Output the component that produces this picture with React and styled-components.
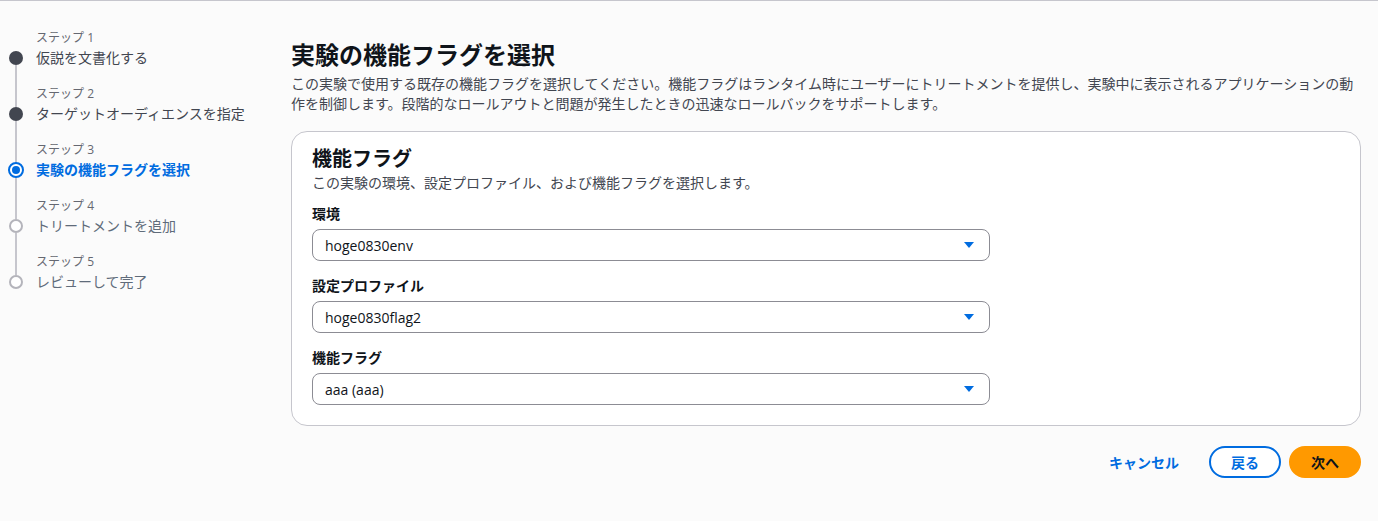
import React from "react";
import styled, { createGlobalStyle } from "styled-components";

const Global = createGlobalStyle`
  html, body { margin: 0; padding: 0; background: #fbfbfb; }
  body {
    font-family: "Open Sans", "Noto Sans CJK JP", sans-serif;
    color: #0f141a;
    font-size: 14px;
    -webkit-font-smoothing: antialiased;
  }
`;

const Page = styled.div`
  min-height: 521px;
  box-sizing: border-box;
  border-top: 1px solid #c6c6cd;
  display: grid;
  grid-template-columns: 291px 1fr;
  padding-right: 17px;
`;

const Nav = styled.nav`
  padding: 29px 0 0 8px;
  display: flex;
  flex-direction: column;
`;

const Step = styled.div`
  display: grid;
  grid-template-columns: 16px 1fr;
  grid-template-rows: 18px 20px ${(p) => (p.$last ? "0px" : "18px")};
  column-gap: 12px;
`;

const StepNum = styled.div`
  grid-column: 2;
  grid-row: 1;
  font-size: 12px;
  line-height: 16px;
  color: #656871;
`;

const StepTitle = styled.div`
  grid-column: 2;
  grid-row: 2;
  font-size: 14px;
  line-height: 20px;
  white-space: nowrap;
  color: ${(p) => (p.$state === "active" ? "#006ce0" : p.$state === "done" ? "#424650" : "#5f6b7a")};
  font-weight: ${(p) => (p.$state === "active" ? 700 : 400)};
`;

const Connector = styled.div`
  grid-column: 1;
  grid-row: ${(p) => p.$row};
  justify-self: center;
  width: 2px;
  background: ${(p) => (p.$hidden ? "transparent" : "#c6c6cd")};
  margin: ${(p) => (p.$row === 1 ? "0 0 -3px" : "-3px 0 0")};
`;

const Dot = styled.div`
  grid-column: 1;
  grid-row: 2;
  align-self: center;
  justify-self: center;
  box-sizing: border-box;
  position: relative;
  z-index: 1;
  border-radius: 50%;
  width: ${(p) => (p.$state === "active" ? "16px" : "14px")};
  height: ${(p) => (p.$state === "active" ? "16px" : "14px")};
  background: ${(p) => (p.$state === "done" ? "#424650" : "#ffffff")};
  border: ${(p) =>
    p.$state === "done" ? "none" : p.$state === "active" ? "2px solid #006ce0" : "2px solid #b4b4bb"};
  display: flex;
  align-items: center;
  justify-content: center;
  &::after {
    content: "";
    display: ${(p) => (p.$state === "active" ? "block" : "none")};
    width: 8px;
    height: 8px;
    border-radius: 50%;
    background: #006ce0;
  }
`;

const Main = styled.main`
  padding-top: 39px;
  display: flex;
  flex-direction: column;
`;

const H1 = styled.h1`
  margin: 0;
  font-size: 24px;
  line-height: 30px;
  font-weight: 700;
  color: #0f141a;
`;

const Desc = styled.p`
  margin: 4px 0 0;
  font-size: 14px;
  line-height: 20px;
  color: #424650;
`;

const Container = styled.section`
  margin-top: 17px;
  background: #ffffff;
  border: 1px solid #c6c6cd;
  border-radius: 16px;
  padding: 15px 20px 20px;
`;

const H2 = styled.h2`
  margin: 0;
  font-size: 20px;
  line-height: 24px;
  font-weight: 700;
  color: #0f141a;
`;

const SubDesc = styled.p`
  margin: 2px 0 0;
  font-size: 14px;
  line-height: 20px;
  color: #424650;
`;

const Fields = styled.div`
  margin-top: 10px;
  display: flex;
  flex-direction: column;
  gap: 14px;
`;

const Field = styled.div`
  display: flex;
  flex-direction: column;
  gap: 4px;
`;

const Label = styled.label`
  font-size: 14px;
  line-height: 22px;
  font-weight: 700;
  color: #0f141a;
`;

const Select = styled.div`
  width: 66%;
  height: 32px;
  box-sizing: border-box;
  border: 1px solid #8c8c94;
  border-radius: 8px;
  padding: 0 14px 0 12px;
  display: flex;
  align-items: center;
  justify-content: space-between;
  font-size: 14px;
  color: #0f141a;
  background: #ffffff;
`;

const Actions = styled.div`
  margin-top: 20px;
  display: flex;
  justify-content: flex-end;
  align-items: center;
  gap: 8px;
`;

const Button = styled.button`
  font-family: inherit;
  height: 32px;
  box-sizing: border-box;
  border-radius: 20px;
  padding: 0 20px;
  font-size: 14px;
  font-weight: 700;
  cursor: pointer;
  border: 2px solid
    ${(p) => (p.$variant === "normal" ? "#006ce0" : p.$variant === "primary" ? "#ff9900" : "transparent")};
  background: ${(p) => (p.$variant === "primary" ? "#ff9900" : p.$variant === "normal" ? "#ffffff" : "transparent")};
  color: ${(p) => (p.$variant === "primary" ? "#0f141a" : "#006ce0")};
`;

const Caret = () => (
  <svg width="12" height="12" viewBox="0 0 12 12" aria-hidden="true">
    <path d="M1 3h10L6 9z" fill="#006ce0" />
  </svg>
);

const steps = [
  { t: "仮説を文書化する", s: "done" },
  { t: "ターゲットオーディエンスを指定", s: "done" },
  { t: "実験の機能フラグを選択", s: "active" },
  { t: "トリートメントを追加", s: "todo" },
  { t: "レビューして完了", s: "todo" },
];

const fields = [
  { l: "環境", v: "hoge0830env" },
  { l: "設定プロファイル", v: "hoge0830flag2" },
  { l: "機能フラグ", v: "aaa (aaa)" },
];

export default function App() {
  return (
    <>
      <Global />
      <Page>
        <Nav>
          {steps.map((st, i) => (
            <Step key={i} $last={i === steps.length - 1}>
              <Connector $row={1} $hidden={i === 0} />
              <StepNum>ステップ {i + 1}</StepNum>
              <Dot $state={st.s} />
              <StepTitle $state={st.s}>{st.t}</StepTitle>
              {i < steps.length - 1 && <Connector $row={3} />}
            </Step>
          ))}
        </Nav>
        <Main>
          <H1>実験の機能フラグを選択</H1>
          <Desc>
            この実験で使用する既存の機能フラグを選択してください。機能フラグはランタイム時にユーザーにトリートメントを提供し、実験中に表示されるアプリケーションの動作を制御します。段階的なロールアウトと問題が発生したときの迅速なロールバックをサポートします。
          </Desc>
          <Container>
            <H2>機能フラグ</H2>
            <SubDesc>この実験の環境、設定プロファイル、および機能フラグを選択します。</SubDesc>
            <Fields>
              {fields.map((f) => (
                <Field key={f.l}>
                  <Label>{f.l}</Label>
                  <Select>
                    <span>{f.v}</span>
                    <Caret />
                  </Select>
                </Field>
              ))}
            </Fields>
          </Container>
          <Actions>
            <Button $variant="link">キャンセル</Button>
            <Button $variant="normal">戻る</Button>
            <Button $variant="primary">次へ</Button>
          </Actions>
        </Main>
      </Page>
    </>
  );
}
